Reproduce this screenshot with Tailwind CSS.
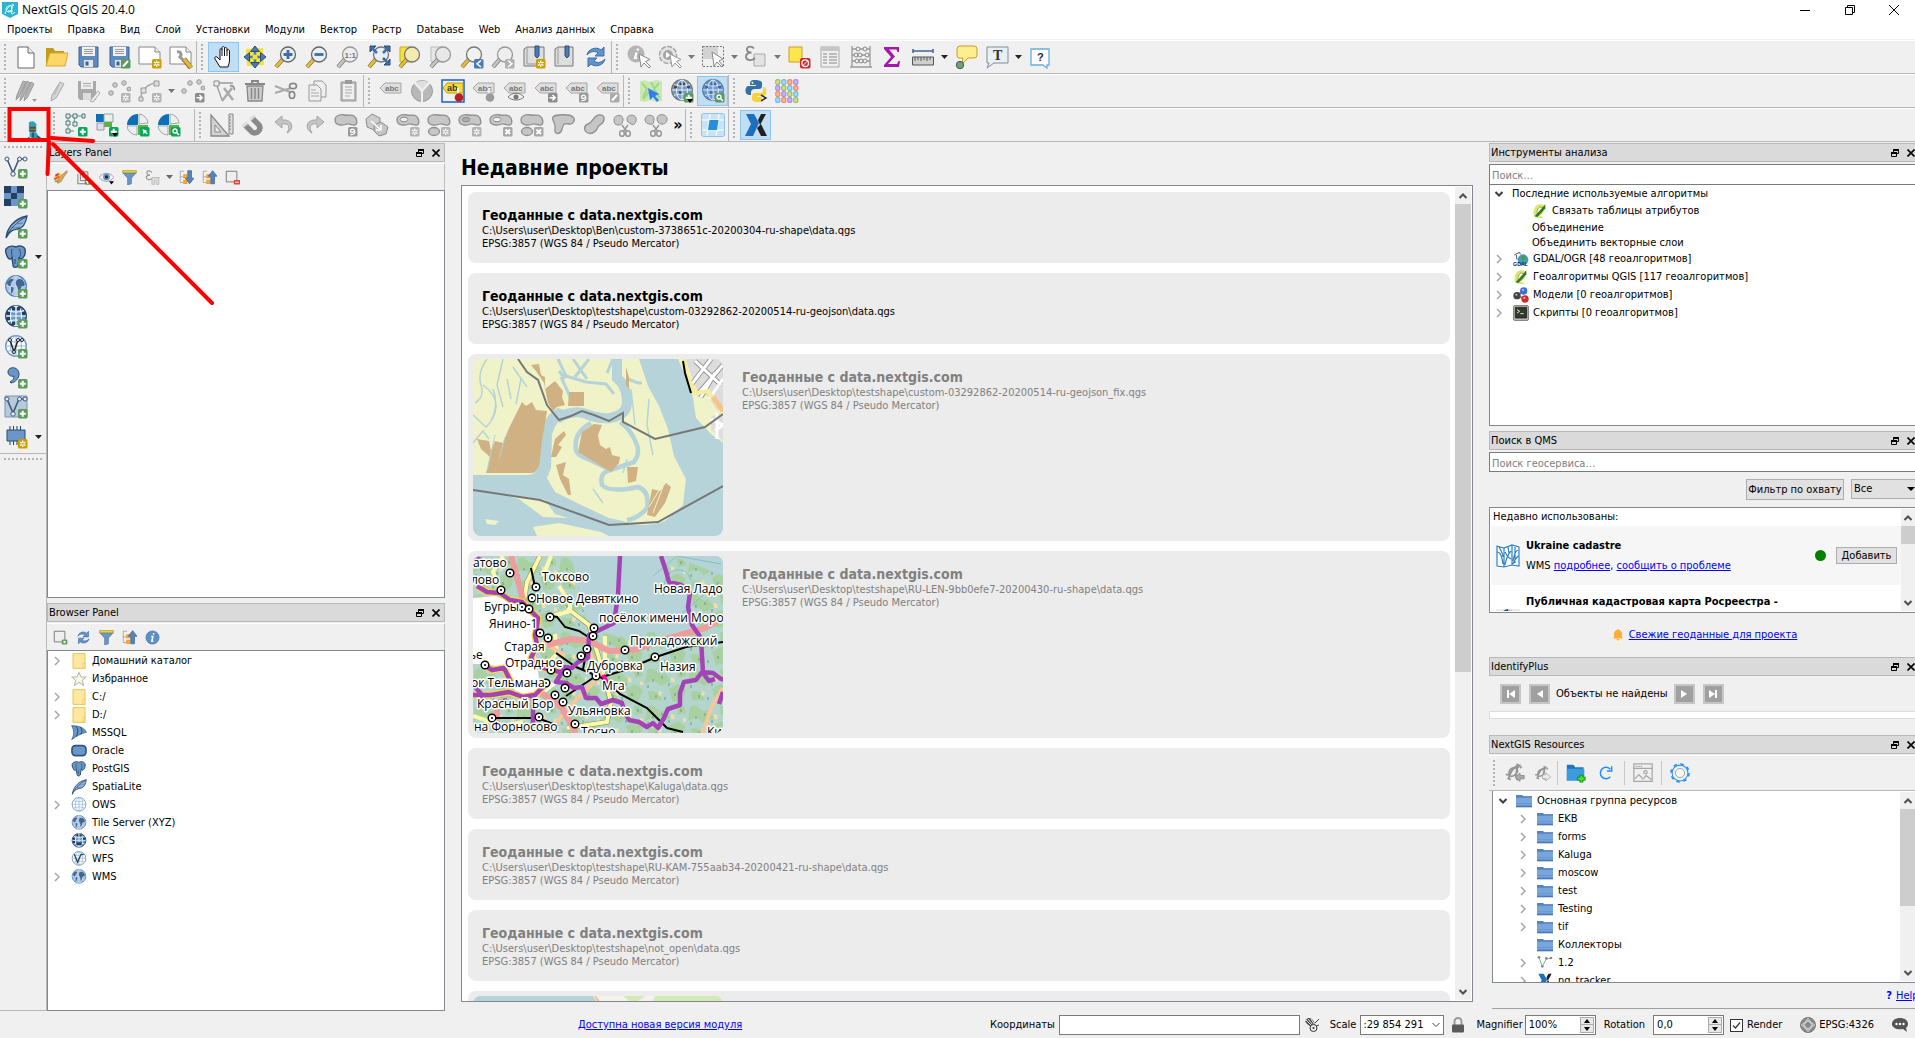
<!DOCTYPE html>
<html lang="ru">
<head>
<meta charset="utf-8">
<title>NextGIS QGIS 20.4.0</title>
<script src="https://cdn.jsdelivr.net/npm/@tailwindcss/browser@4"></script>
</head>
<body class="h-screen overflow-hidden bg-[#f0f0f0] text-black text-[11px] leading-4 font-['DejaVu_Sans_Condensed','Noto_Sans',sans-serif] flex flex-col relative cursor-default">

<header class="bg-white border-b border-[#f0f0f0] shrink-0">
  <div class="h-[19px] flex items-center pl-0.5">
    <svg class="size-4 mr-1" viewBox="0 0 16 16"><path d="M0 0h16v12l-8 4-8-4z" fill="#2cb5d3"/><path d="M3 12C5 5 9 2 12 3c-2 0-4 8-2 9 1 0 2-1 3-2M4 7c0-3 6-5 6-1s-5 6-6 1M6 9h5" fill="none" stroke="#fff"/></svg>
    <h1 class="font-['Open_Sans','Noto_Sans',sans-serif] text-xs leading-4 flex-1">NextGIS QGIS 20.4.0</h1>
    <button aria-label="Свернуть" class="w-[45px] h-4 grid place-items-center"><svg class="size-3" viewBox="0 0 12 12"><path d="M1 6.500h10" stroke="#000"/></svg></button>
    <button aria-label="Развернуть" class="w-[45px] h-4 grid place-items-center"><svg class="size-3" viewBox="0 0 12 12"><path d="M1.500 3.500h7v7h-7zM3.500 3.500v-2h7v7h-2" fill="none" stroke="#000"/></svg></button>
    <button aria-label="Закрыть" class="w-[43px] h-4 grid place-items-center"><svg class="size-3" viewBox="0 0 12 12"><path d="M1 1l10 10M11 1L1 11" stroke="#000"/></svg></button>
  </div>
  <nav id="menu" class="h-5 flex items-center gap-[15px] pl-[7px] pt-0.5"></nav>
</header>

<div id="bars" class="shrink-0"></div>

<main class="flex flex-1 min-h-0">
  <aside id="side" class="w-[47px] shrink-0 border-r border-b border-[#b8b8b8] flex flex-col"></aside>

  <div class="w-[398px] shrink-0 flex flex-col gap-[5px] pt-px">
    <section class="flex flex-col flex-[455] min-h-0">
      <div data-dock="Layers Panel"></div>
      <div id="layerTools" class="h-[27px] mt-px border-t border-r border-t-white border-[#c0c0c0] flex items-center pl-0.5 shrink-0"></div>
      <div class="flex-1 bg-white border border-[#828790]"></div>
    </section>
    <section class="flex flex-col flex-[408] min-h-0">
      <div data-dock="Browser Panel"></div>
      <div id="browserTools" class="h-[27px] mt-px border-t border-r border-t-white border-[#c0c0c0] flex items-center pl-0.5 shrink-0"></div>
      <ul id="browserTree" class="flex-1 bg-white border border-[#828790] pt-px"></ul>
    </section>
  </div>

  <section class="flex-1 min-w-0 flex flex-col px-4 pb-[9px]">
    <h2 class="text-[21px] leading-[26px] font-bold pt-[13px] pb-1">Недавние проекты</h2>
    <div class="flex-1 min-h-0 bg-white border border-[#828790] flex overflow-hidden pr-px">
      <div id="projects" class="flex-1 min-w-0 flex flex-col gap-2.5 pl-1.5 pr-[5px] pt-1.5 overflow-hidden"></div>
      <div class="w-4 bg-[#f0f0f0] flex flex-col my-px">
        <button aria-label="Вверх" class="h-[17px] grid place-items-center shrink-0"><svg class="size-2" viewBox="0 0 8 8"><path d="M0.500 6L4 2.500 7.500 6" fill="none" stroke="#505050" stroke-width="2"/></svg></button>
        <div class="bg-[#cdcdcd] grow-[467]"></div><div class="grow-[311]"></div>
        <button aria-label="Вниз" class="h-[17px] grid place-items-center shrink-0"><svg class="size-2" viewBox="0 0 8 8"><path d="M0.500 2L4 5.500 7.500 2" fill="none" stroke="#505050" stroke-width="2"/></svg></button>
      </div>
    </div>
  </section>

  <div class="w-[426px] shrink-0 flex flex-col pt-px overflow-hidden">
    <section class="flex flex-col flex-1 min-h-0 mb-[5px]">
      <div data-dock="Инструменты анализа"></div>
      <input aria-label="Поиск алгоритма" placeholder="Поиск…" class="mt-0.5 h-[21px] pt-0.5 shrink-0 bg-white border border-r-0 border-[#7a7a7a] px-0.5 placeholder:text-[#808080]">
      <ul id="toolTree" class="flex-1 bg-white border border-r-0 border-t-0 border-[#828790] pt-px"></ul>
    </section>

    <section class="flex flex-col">
      <div data-dock="Поиск в QMS"></div>
      <input aria-label="Поиск геосервиса" placeholder="Поиск геосервиса…" class="mt-0.5 h-[20px] pt-0.5 bg-white border border-r-0 border-[#7a7a7a] px-0.5 placeholder:text-[#808080]">
      <div class="flex justify-end items-start gap-[7px] pt-[7px]">
        <button class="h-[21px] w-[98px] bg-[#e1e1e1] border border-[#adadad] whitespace-nowrap grid place-items-center">Фильтр по охвату</button>
        <div class="relative w-16">
          <select aria-label="Тип геосервиса" class="appearance-none w-full h-5 bg-[#e1e1e1] border border-r-0 border-[#adadad] pl-0.5"><option>Все</option></select>
          <svg class="absolute right-0 top-2 w-2 h-1 pointer-events-none" viewBox="0 0 8 4"><path d="M0 0h8L4 4z"/></svg>
        </div>
      </div>
      <div class="mt-[7px] h-[106px] bg-white border border-r-0 border-[#828790] flex overflow-hidden p-px pr-0">
        <div class="flex-1 min-w-0 overflow-hidden">
          <p class="pl-0.5 pb-px leading-4 h-[17px]">Недавно использованы:</p>
          <article class="bg-[#f6f6f6] h-[59px] flex items-center pl-[5px] pr-1">
            <svg class="size-6 shrink-0 mr-1.5" viewBox="0 0 24 24"><path d="M0 0h24v24H0z" fill="#fff"/><path d="M1 2l7 2 8-3 7 2v19l-7-1-8 2-7-1zM8 4v19M16 1v20M1 8c4 0 5 6 6 12M3 3c3 5 4 8 4 10M9 8c2 4 4 6 6 7M15 7c-4 4-5 9-6 14M22 6c-3 1-4 5-5 11M19 3v16M12 3l1 6M22 12c-3 3-4 5-5 8" fill="none" stroke="#2a7fc4" stroke-width="1.200"/></svg>
            <div class="flex-1">
              <h3 class="font-bold pb-1 pt-px">Ukraine cadastre</h3>
              <p>WMS <a href="#" class="text-[#0000ff] underline">подробнее</a>, <a href="#" class="text-[#0000ff] underline">сообщить о проблеме</a></p>
            </div>
            <span class="size-[11px] rounded-full bg-[#008000] mr-2.5"></span>
            <button class="h-[17px] w-[61px] bg-[#e1e1e1] border border-[#adadad] grid place-items-center">Добавить</button>
          </article>
          <article class="flex pl-[5px] pr-1 pt-2.5">
            <svg class="size-6 shrink-0 mr-1.5 mt-3.5" viewBox="0 0 24 24"><path d="M0 0h24v24H0z" fill="#eaeaea"/><path d="M4 8A9 9 0 0 1 12 0v12z" fill="#0a4f92"/><path d="M12 0a9 9 0 0 1 8 8l-8 4z" fill="#b9b9b9"/></svg>
            <h3 class="font-bold flex-1 leading-[14px]">Публичная кадастровая карта Росреестра -<br>Районы</h3>
            <button class="h-[17px] w-[61px] mt-4 bg-[#e1e1e1] border border-[#adadad] grid place-items-center">Добавить</button>
          </article>
        </div>
        <div class="w-3.5 bg-[#f0f0f0] flex flex-col">
          <button aria-label="Вверх" class="h-[17px] grid place-items-center shrink-0"><svg class="size-2" viewBox="0 0 8 8"><path d="M0.500 6L4 2.500 7.500 6" fill="none" stroke="#505050" stroke-width="2"/></svg></button>
          <div class="bg-[#cdcdcd] h-[18px] shrink-0"></div><div class="flex-1"></div>
          <button aria-label="Вниз" class="h-[17px] grid place-items-center shrink-0"><svg class="size-2" viewBox="0 0 8 8"><path d="M0.500 2L4 5.500 7.500 2" fill="none" stroke="#505050" stroke-width="2"/></svg></button>
        </div>
      </div>
      <p class="h-[44px] flex items-center justify-center gap-1.5 pl-1.5">
        <svg class="w-2.5 h-3" viewBox="0 0 10 12"><path d="M5 0c1 0 1 1 1 1 2 .5 3 2 3 4v3l1 1.500H0L1 8V5c0-2 1-3.500 3-4 0 0 0-1 1-1zM3.500 10h3a1.500 1.500 0 0 1-3 0z" fill="#ffad33"/></svg>
        <a href="#" class="text-[#0000ff] underline">Свежие геоданные для проекта</a>
      </p>
    </section>

    <section class="flex flex-col pb-4">
      <div data-dock="IdentifyPlus"></div>
      <div id="identify" class="flex items-center h-[35px] pl-[11px] gap-2"></div>
      <div class="h-2 bg-white border border-r-0 border-[#dcdcdc]"></div>
    </section>

    <section class="flex flex-col">
      <div data-dock="NextGIS Resources"></div>
      <div id="ngTools" class="h-9 mt-px border-t border-t-white border-b border-b-[#b8b8b8] flex items-center"></div>
      <div class="h-[192px] ml-[3px] bg-white border border-t-0 border-r-0 border-[#828790] flex overflow-hidden">
        <ul id="ngTree" class="flex-1 min-w-0 overflow-hidden pt-px"></ul>
        <div class="w-[15px] bg-[#f0f0f0] flex flex-col my-px">
          <button aria-label="Вверх" class="h-[17px] grid place-items-center shrink-0"><svg class="size-2" viewBox="0 0 8 8"><path d="M0.500 6L4 2.500 7.500 6" fill="none" stroke="#505050" stroke-width="2"/></svg></button>
          <div class="bg-[#cdcdcd] h-[97px] shrink-0"></div><div class="flex-1"></div>
          <button aria-label="Вниз" class="h-[17px] grid place-items-center shrink-0"><svg class="size-2" viewBox="0 0 8 8"><path d="M0.500 2L4 5.500 7.500 2" fill="none" stroke="#505050" stroke-width="2"/></svg></button>
        </div>
      </div>
      <p class="h-[26px] ml-[3px] border-b border-[#a0a0a0] flex items-center justify-end gap-1 text-[#0000ff] whitespace-nowrap mb-0.5"><b>?</b><a href="#" class="underline w-[19px]">Help</a></p>
    </section>
  </div>
</main>

<footer class="h-[27px] shrink-0 flex items-center whitespace-nowrap pt-px">
  <div class="w-[446px] shrink-0"></div>
  <div class="flex-1 pl-[132px]"><a href="#" class="text-[#0000ff] underline">Доступна новая версия модуля</a></div>
  <label for="coord" class="mr-1">Координаты</label>
  <input id="coord" class="w-[241px] h-5 bg-white border border-[#7a7a7a] mr-1">
  <svg class="size-4 mr-2.5" viewBox="0 0 16 16"><path d="M5 1c3 0 6 4 6 7 0 2-1 3-3 2C5 9 2 6 1 4c0-2 2-3 4-3z" fill="#444"/><path d="M2 3l6 6M4 2l5 6M7 2l4 6M3 1l-2 3" stroke="#eee"/><circle cx="9.500" cy="11" r="3.500" fill="#eee" stroke="#333"/><circle cx="9.500" cy="11" r="1" fill="#333"/><path d="M11 6l4-4M12 9l3-1" stroke="#444"/></svg>
  <label for="scale" class="mr-1">Scale</label>
  <div class="relative w-[84px] mr-1">
    <select id="scale" class="appearance-none w-full h-5 bg-white border border-[#7a7a7a] px-0.5"><option>:29 854 291</option></select>
    <svg class="absolute right-1 top-1.5 w-2 h-2 pointer-events-none" viewBox="0 0 8 8"><path d="M0.500 2L4 5.500 7.500 2" fill="none" stroke="#444"/></svg>
  </div>
  <svg class="w-3 h-4 mr-3 ml-1" viewBox="0 0 12 16"><path d="M2.500 8V4.500a3.500 3.500 0 0 1 7 0V8" fill="none" stroke="#999" stroke-width="2"/><rect y="7.500" width="12" height="8" rx="1" fill="#5a5a5a"/></svg>
  <label for="mag" class="mr-0.5">Magnifier</label>
  <div class="flex w-[71px] h-5 bg-white border border-[#7a7a7a] mr-2 p-px">
    <input id="mag" value="100%" class="w-0 flex-1 pl-0.5">
    <div class="w-3.5 flex flex-col bg-[#e8e8e8] border border-[#adadad] justify-around items-center"><svg class="w-1.5 h-1" viewBox="0 0 6 4"><path d="M0 4l3-4 3 4z"/></svg><hr class="w-full border-[#adadad]"><svg class="w-1.5 h-1" viewBox="0 0 6 4"><path d="M0 0l3 4 3-4z"/></svg></div>
  </div>
  <label for="rot" class="mr-2">Rotation</label>
  <div class="flex w-[71px] h-5 bg-white border border-[#7a7a7a] mr-1.5 p-px">
    <input id="rot" value="0,0" class="w-0 flex-1 pl-0.5">
    <div class="w-3.5 flex flex-col bg-[#e8e8e8] border border-[#adadad] justify-around items-center"><svg class="w-1.5 h-1" viewBox="0 0 6 4"><path d="M0 4l3-4 3 4z"/></svg><hr class="w-full border-[#adadad]"><svg class="w-1.5 h-1" viewBox="0 0 6 4"><path d="M0 0l3 4 3-4z"/></svg></div>
  </div>
  <label class="flex items-center gap-1 mr-[18px]"><span class="relative size-[13px]"><input type="checkbox" checked class="appearance-none block size-[13px] bg-white border border-[#333]"><svg class="absolute inset-0 size-[13px] pointer-events-none" viewBox="0 0 13 13"><path d="M3 6.500L5.500 9 10 3.500" fill="none" stroke="#333" stroke-width="1.200"/></svg></span>Render</label>
  <button class="flex items-center gap-[3px] mr-[18px]"><svg class="size-4" viewBox="0 0 16 16"><circle cx="8" cy="8" r="7.500" fill="#888"/><circle cx="8" cy="8" r="4.500" fill="none" stroke="#ccc"/><path d="M8 .5L4.500 8 8 15.500 11.500 8zM.5 8L8 4.500 15.500 8 8 11.500z" fill="none" stroke="#d5d5d5" stroke-width=".8"/><circle cx="8" cy="8" r="7.500" fill="none" stroke="#777"/></svg>EPSG:4326</button>
  <button aria-label="Сообщения" class="mr-[7px]"><svg class="size-4" viewBox="0 0 16 16"><path d="M8 1c4 0 8 2 8 6 0 2-1 3-2 4l1 4-4-3c-6 1-11-1-11-5s4-6 8-6z" fill="#555"/><circle cx="4.500" cy="7" r="1.200" fill="#fff"/><circle cx="8" cy="7" r="1.200" fill="#fff"/><circle cx="11.500" cy="7" r="1.200" fill="#fff"/></svg></button>
</footer>

<!-- red marker around the bot button -->
<svg class="absolute left-0 top-[100px] w-[230px] h-[220px] pointer-events-none" viewBox="0 100 230 220" fill="none" stroke="#f00" stroke-width="4" stroke-linecap="round"><path d="M9.500 109h39v31h-39z"/><path d="M51 138l42 3M49 142l-1.500 32M53 144l159 159"/></svg>

<script>
// ---- icon drawings, 24 x 24 ----
const badge = (c, inner) => `<rect x="14" y="14" width="9.500" height="9.500" rx="1.500" fill="${c}"/>${inner}`;
const plus = badge('#5c9a5c', '<path d="M18.700 15.800v6M15.800 18.700h6" stroke="#fff" stroke-width="2"/>');
const gplus = badge('#09a55b', '<path d="M18.700 15.800v6M15.800 18.700h6" stroke="#fff" stroke-width="2"/>');
const starOf = c => badge(c, '<path d="M18.700 15.500v6.500M16 17l5.500 3.500M21.500 17L16 20.500" stroke="#fff" stroke-width="1.300"/><circle cx="18.700" cy="18.700" r="1" fill="' + c + '"/>');
const star = starOf('#c9a000'), gstar = starOf('#b4b4b4');
const gx = badge('#a8a8a8', '<path d="M16.500 16.500l4.500 4.500M21 16.500L16.500 21" stroke="#fff" stroke-width="2"/>');
const garrow = badge('#8c8c8c', '<path d="M15.500 18.700h5M18.500 16l2.700 2.700-2.700 2.700" stroke="#fff" stroke-width="1.500" fill="none"/>');
const grot = badge('#999', '<path d="M16.500 21.500c4 .5 5-2 4-4s-4-1.500-4 .5 3 2 3 0" stroke="#fff" stroke-width="1.300" fill="none"/>');
const gpen = badge('#aaa', '<path d="M16 21.500l5-5.500" stroke="#fff" stroke-width="2"/>');
const lens = (f, s, h, extra = '') => `<path d="M2 22l7-8" stroke="#555" stroke-width="4"/><path d="M2 22l6.500-7.500" stroke="${h}" stroke-width="3"/><circle cx="14" cy="9.500" r="7.500" fill="${f}" stroke="${s}" stroke-width="1.300"/>${extra}`;
const abc = (f, s, t) => `<path d="M1 9l5-5h16v10H6z" fill="${f}" stroke="${s}"/><text x="6" y="12" font-size="8" font-weight="bold" fill="${t}" font-family="Liberation Sans">abc</text>`;
const gabc = abc('#dedede', '#a5a5a5', '#777');
const pin = (c, f) => `<path d="M17 9v7" stroke="${f}" stroke-width="2"/><circle cx="18" cy="18.500" r="4.300" fill="${c}"/>`;
const blob = '<path d="M1 7c0-5 6-6 10-5s6-1 9 1 4 8 1 9-6-2-8-1-12 3-12-4z" fill="#c6c6c6" stroke="#8f8f8f" stroke-width="1.300"/>';
const ring = '<ellipse cx="8" cy="6.500" rx="3.800" ry="2.300" fill="#f0f0f0" stroke="#8d8d8d"/>';
const globe = (f, s, l) => `<circle cx="12" cy="11" r="10.300" fill="${f}" stroke="${s}" stroke-width="1.300"/><path d="M2 11h20M12 1v20M4 5.500c5 2 11 2 16 0M4 16.500c5-2 11-2 16 0" stroke="${l}" fill="none"/><ellipse cx="12" cy="11" rx="5.500" ry="10" fill="none" stroke="${l}"/>`;
const worldBlobs = '<path d="M3 7c2-3 5-4 6-3s-1 3-2 4 1 3-1 3-3-2-3-4zM7 12c3 0 3 2 2 4s-1 3-2 2zM13 5c2-2 6-1 7 2s1 4-1 4-2 2-3 5-2 1-2-2-2-3-2-5-1-2 1-4z" fill="#31557e" fill-opacity=".85"/>';
const cursor = (f, s) => `<path d="M12 9l2 13 3-4 5 5 1.500-1.500-5-5 4.500-2z" fill="${f}" stroke="${s}"/>`;
const pie = '<path d="M12 1v11H1A11 11 0 0 1 12 1z" fill="#0d6fb5"/><path d="M13 1a10 10 0 0 1 9 9l-9 1z" fill="#eee" stroke="#9aa"/><path d="M1 13h10v9A10 10 0 0 1 1 13z" fill="#eee" stroke="#9aa"/><path d="M12 12h10v10H12z" fill="#5ab246"/>';
const scissors = '<path d="M9 12l5 7M15 12l-5 7" stroke="#999" stroke-width="1.500"/><ellipse cx="9" cy="20.500" rx="2.300" ry="2.800" fill="none" stroke="#999" stroke-width="1.500"/><ellipse cx="15" cy="20.500" rx="2.300" ry="2.800" fill="none" stroke="#999" stroke-width="1.500"/>';
const letterX = '<path d="M2 1h8l5 9-6 13H1l6-12z" fill="#1a6fbf"/><path d="M22 1h-5l-3 6 2 5zM13 15l4 8h6l-6-12z" fill="#222"/>';
const elephant = '<path d="M2 4c3-4 8-3 10-2 3-2 8-1 9 2 1 5-1 9-4 10l-2-1-1 8c-1 2-5 2-5-1l-1-7c-2 2-4 1-5-2S1 7 2 4z" fill="#6a97c8" stroke="#2c4a70" stroke-width="1.400"/><path d="M8 4c-1 3 0 6 0 9M15 4c2 3 2 6 0 9M11 14v5" fill="none" stroke="#2c4a70"/>';
const vee = c => `<path d="M3 4l6 14 6-14h5" fill="none" stroke="${c}" stroke-width="1.600"/><circle cx="3" cy="4" r="2" fill="#eee" stroke="${c}"/><circle cx="9" cy="19" r="2.200" fill="#eee" stroke="${c}"/><circle cx="15.500" cy="4" r="2" fill="#eee" stroke="${c}"/><circle cx="21" cy="4" r="2" fill="#eee" stroke="${c}"/>`;
const feather = '<path d="M2 23C3 14 9 4 23 1c-1 6-3 12-9 13-5 1-8 1-12 9z" fill="#8fb4dd" stroke="#2c4a70" stroke-width="1.300"/><path d="M3 20C8 12 14 6 22 2" fill="none" stroke="#2c4a70"/><path d="M9 13l7-1M12 9l7-1" fill="none" stroke="#5d83ad"/>';
const gis = '<path d="M4 20C6 10 12 3 17 3c-3 3-5 12-3 16 1 2 4 0 5-2M5 12c0-5 6-8 9-5s-2 9-6 9-3-2-3-4M3 18l4 2M14 1l2 2M18 6l2-2M1 14h3" fill="none" stroke="#969696" stroke-width="2.200"/>';
const folderB = '<path d="M0 3h9l1.500 2H24v16H0z" fill="#78a5dc"/><path d="M0 3h9l1.500 2H24v2H0z" fill="#5583bd"/><path d="M0 19h24v2.500H0z" fill="#4a78b3"/><path d="M0 16h24" stroke="#5f8fca"/>';
const filter = '<path d="M1 1h22v4H1z" fill="#f0d833" stroke="#9b8b1d"/><path d="M2 5h20l-7 8v9l-6 2V13z" fill="#6a97c8" stroke="#4a6f9c"/>';
const refresh = '<path d="M3 10C4 4 12 1 17 5l3-3v9h-9l3-3c-4-3-8-1-11 2zM21 14c-1 6-9 9-14 5l-3 3v-9h9l-3 3c4 3 8 1 11-2z" fill="#5e93cc" stroke="#3f6fa6"/>';
const treeDots = '<path d="M2 2h6M2 2v18h6M2 11h6" stroke="#888" fill="none"/><path d="M8 8h4v4H8zM8 17h4v4H8z" fill="none" stroke="#ff9c1c" stroke-width="2.500"/>';
const qgisQ = '<path d="M3 20C1 12 4 2 12 2s9 4 7 9-6 8-10 7c4 2 8 2 9 5-8 0-14-1-15-3z" fill="#d9e86c"/><path d="M12 6c-5 2-6 12-2 12s6-8 6-11z" fill="#fff" stroke="#6d8b1b"/><path d="M4 20L20 2v6L8 21z" fill="#2f7a2a"/>';

const I = {
  new: '<path d="M4 2h10l6 6v15H4z" fill="#fff" stroke="#666"/><path d="M14 2v6h6" fill="#eee" stroke="#666"/>',
  open: '<path d="M1 21V3h7l2 3h9v4" fill="#c29a1c"/><path d="M1 21L5 8h18l-3 13z" fill="#fcd667" stroke="#d9a92c"/>',
  save: '<path d="M3 2h19v20H5l-2-2z" fill="#5d8ac0" stroke="#3f628e"/><path d="M6 2h13v9H6z" fill="#f3f3f3"/><path d="M8 4.500h9M8 6.500h9M8 8.500h9" stroke="#999"/><path d="M8 15h9v7H8z" fill="#e5e5e5"/><path d="M9.500 16.500h3v4h-3z" fill="#3f628e"/>',
  new2: '<path d="M1 2h16l5 5v12H1z" fill="#fff" stroke="#888"/><path d="M17 2v5h5" fill="#eee" stroke="#888"/>' + star,
  wrench: '<path d="M1 2h16l5 5v12H1z" fill="#fff" stroke="#888"/><path d="M17 2v5h5" fill="#eee" stroke="#888"/><path d="M8 7c4-1 5 3 3 5l4 4M14 14l2 3" fill="none" stroke="#999" stroke-width="3"/><path d="M15 14l7 9" stroke="#8a6a1a" stroke-width="5"/><path d="M15 14l7 8.500" stroke="#e3b93a" stroke-width="3.500"/>',
  hand: '<path d="M8 22l-5-8c-1-2 1-3 2-2l3 3V5c0-2 2-2 2 0V3c0-2 2.500-2 2.500 0v1c0-2 2.500-2 2.500 0v2c0-2 2.500-2 2.500 0v9c0 3-1 4-1.500 7z" fill="#fff" stroke="#111"/><path d="M10 5v6M12.500 4v7M15 6v5" stroke="#111"/>',
  pan: '<path d="M3 4l17-1 1 17-17 1z" fill="#f6e13a"/><path d="M12 5v14M5 12h14" stroke="#4a7ab5" stroke-width="2.500"/><path d="M12 1l4.500 5.500h-9zM12 23l4.500-5.500h-9zM1 12l5.500-4.500v9zM23 12l-5.500-4.500v9z" fill="#4a7ab5" stroke="#2d4d77"/><circle cx="12" cy="12" r="2.500" fill="#f6e13a"/>',
  zin: lens('#e9eff6', '#666', '#e8bb35', '<path d="M14 5v9M9.500 9.500h9" stroke="#3f6ca6" stroke-width="2.800"/>'),
  zout: lens('#e9eff6', '#666', '#e8bb35', '<path d="M9.500 9.500h9" stroke="#3f6ca6" stroke-width="2.800"/>'),
  z11: lens('#eee', '#999', '#c4c4c4', '<text x="8.500" y="12.500" font-size="8" font-weight="bold" fill="#777" font-family="Liberation Sans">1:1</text>'),
  zfull: lens('#e8eef5', '#777', '#e8bb35', '<path d="M3 1h6L3 7zM23 1v6l-6-6zM23 20v-6l-6 6z" fill="#3f6ca6" stroke="#2d4d77"/><path d="M4 2l6 6M22 2l-6 6M22 19l-6-6" stroke="#3f6ca6" stroke-width="2.500"/>'),
  zsel: '<path d="M2 2h12v15H2z" fill="#f6e13a" stroke="#c4b020"/>' + lens('#f3ebb0', '#777', '#e8bb35'),
  zlay: '<path d="M2 2h12v15H2z" fill="#e6e6e6" stroke="#bbb"/>' + lens('#e8e8e8', '#999', '#c4c4c4'),
  zlast: lens('#f1f1f1', '#777', '#e8bb35', badge('#4a7ab5', '<path d="M21 15.500l-4 3.300 4 3.200" fill="none" stroke="#fff" stroke-width="1.500"/>')),
  znext: lens('#eee', '#999', '#c4c4c4', badge('#b0b0b0', '<path d="M17 15.500l4 3.300-4 3.200" fill="none" stroke="#fff" stroke-width="1.500"/>')),
  bmnew: '<path d="M2 4l3-2h17v19H2z" fill="#dedede" stroke="#777"/><path d="M5 2v17M5 19h17" stroke="#999"/><path d="M13 1h4v10l-2 2-2-2z" fill="#4a7ab5" stroke="#2d4d77"/>' + star,
  bm: '<path d="M2 4l3-2h15v19H2z" fill="#dedede" stroke="#777"/><path d="M5 2v17" stroke="#999"/><path d="M12 1h4v10l-2 2-2-2z" fill="#4a7ab5" stroke="#2d4d77"/>',
  refresh,
  info: '<circle cx="9" cy="9" r="8.500" fill="#b5b5b5"/><path d="M11 3.500l-.5 2M9.500 7.500L8 13h2" stroke="#fff" stroke-width="2.200" fill="none"/>' + cursor('#fff', '#888'),
  gear: '<circle cx="10" cy="10" r="8.500" fill="#e3e3e3" stroke="#a5a5a5" stroke-width="1.500" stroke-dasharray="5 1.500"/><circle cx="10" cy="10" r="5" fill="#a5a5a5"/><path d="M8 7l5 3-5 3z" fill="#fff"/>' + cursor('#fff', '#999'),
  select: '<path d="M2 1h15v13H2z" fill="#d2d2d2"/><path d="M1.500 1.500h21v20h-21z" fill="none" stroke="#777" stroke-dasharray="2 1.500"/><path d="M11 7l2 14 3-4 5 5 1-1-4-5 4-2z" fill="#fff" stroke="#888"/>',
  eps: '<path d="M10 9h11v12H10z" fill="#e3e3e3" stroke="#aaa"/><path d="M10 3.500C7 0 2 2 3 5q.5 2.500 4.500 2.500Q2 8 2 11.500C2 16 8 16 11 13" fill="none" stroke="#888" stroke-width="1.800"/>',
  desel: '<path d="M2 2h13v15H2z" fill="#fbe64d" stroke="#c9a21c"/><rect x="13" y="13" width="10.500" height="10.500" rx="2" fill="#d8262c"/><circle cx="18.200" cy="18.200" r="3.300" fill="none" stroke="#fff" stroke-width="1.300"/><path d="M20.500 16l-5 5" stroke="#fff"/>',
  table: '<path d="M3 2h18v20H3z" fill="#eee" stroke="#aaa"/><path d="M3 2h18v4H3z" fill="#c5c5c5"/><path d="M5 9h4M5 12h4M5 15h4M5 18h4M11 9h8M11 12h8M11 15h8M11 18h8" stroke="#aaa" stroke-width="1.500"/>',
  abacus: '<path d="M3 1v21M21 1v21M3 4h18M3 10h18M3 16h18M1 22h22" stroke="#999" stroke-width="1.300"/><g fill="#eee" stroke="#888"><circle cx="9" cy="4" r="2"/><circle cx="16" cy="4" r="2"/><circle cx="7" cy="10" r="2"/><circle cx="11" cy="10" r="2"/><circle cx="18" cy="10" r="2"/><circle cx="8" cy="16" r="2"/><circle cx="12" cy="16" r="2"/><circle cx="16" cy="16" r="2"/></g>',
  sigma: '<path d="M4 2h15v5h-1.500l-1-2.500H9l6 7-7 7.500h9l1.500-3H20l-1 6H4v-2l7-8-7-8z" fill="#a31aa8"/>',
  ruler: '<path d="M2 6h20M2 4v4M22 4v4" stroke="#40648f" stroke-width="1.500"/><path d="M1.500 12h21v8h-21z" fill="#cfcfcf" stroke="#555"/><path d="M4 12v4M7 12v3M10 12v4M13 12v3M16 12v4M19 12v3" stroke="#555"/>',
  tip: '<path d="M6 1h14q3 0 3 3v6q0 3-3 3h-6l-6 6 1-6H5q-2 0-2-3V4q0-3 3-3z" fill="#fdee91" stroke="#c9a21c"/><circle cx="6" cy="20" r="3.700" fill="#6fa46f" stroke="#456"/>',
  text: '<path d="M2 2h21v16H9l-7 5 2-5H2z" fill="#e8f0f4" stroke="#889"/><text x="8" y="14.500" font-size="14" font-weight="bold" fill="#333" font-family="Liberation Serif">T</text>',
  help: '<path d="M3 4h18v16h-2v3l-4-3H3z" fill="#fff" stroke="#6cabdc" stroke-width="1.300"/><text x="9" y="16" font-size="11" font-weight="bold" fill="#225" font-family="Liberation Sans">?</text>',
  pencils: '<path d="M2 21l1-5L9 2l3 1-7 15zM6 22l1-5L13 2l3 2-7 14zM10 22l1-5L17 3l3 2-7 14z" fill="#b4b4b4" stroke="#999"/><path d="M18 20h5l-2.500 3z" fill="#999"/>',
  pencil: '<path d="M6 22l1-6L15 3l4 2-8 14z" fill="#d6d6d6" stroke="#aaa"/><path d="M14 6L9 16" stroke="#bbb" stroke-width="1.500"/>',
  gsave: '<path d="M2 2h18v19H4l-2-2z" fill="#a9a9a9"/><path d="M5 2h12v8H5z" fill="#eee"/><path d="M7 4.500h8M7 7h8" stroke="#aaa"/><path d="M7 14h8v7H7z" fill="#ddd"/><path d="M14 22l8-10 2 2-7 9z" fill="#eee" stroke="#aaa"/>',
  pts: '<g fill="#ccc" stroke="#999"><circle cx="4" cy="14" r="2.300"/><circle cx="8" cy="6" r="2.300"/><circle cx="17" cy="4" r="2.300"/><circle cx="22" cy="10" r="2"/></g>' + gstar,
  arc: '<path d="M3 21C2 12 9 5 18 4" fill="none" stroke="#aaa" stroke-width="1.500"/><path d="M1 18h4v4H1zM3 9h5v5H3zM16 2h5v5h-5z" fill="#ddd" stroke="#999"/>' + gstar,
  ptmove: '<g fill="#ccc" stroke="#999"><circle cx="3" cy="12" r="2.300"/><circle cx="9" cy="4" r="2.300"/><circle cx="18" cy="3" r="2.300"/><circle cx="22" cy="9" r="2"/></g>' + garrow,
  node: '<path d="M4 4h17M4 4l6 17" stroke="#999" stroke-width="1.300"/><path d="M2 2h5v5H2z" fill="#eee" stroke="#888"/><path d="M12 9l9 12M20 9L10 22" stroke="#aaa" stroke-width="2.500"/><path d="M18 7c3-1 5 2 4 4" fill="none" stroke="#999" stroke-width="2"/>',
  trash: '<path d="M4 7h16l-1 15H5z" fill="#ccc" stroke="#888" stroke-width="1.300"/><path d="M2 5h20M9 5V2h6v3" stroke="#888" stroke-width="2" fill="none"/><path d="M8.500 9v11M12 9v11M15.500 9v11" stroke="#888" stroke-width="1.500"/>',
  cut: '<path d="M1 7l15 6M1 14L17 9" stroke="#aaa" stroke-width="2"/><ellipse cx="19" cy="7" rx="3.500" ry="2.700" fill="none" stroke="#888" stroke-width="1.700"/><ellipse cx="18" cy="16" rx="2.700" ry="3.500" fill="none" stroke="#888" stroke-width="1.700"/>',
  copy: '<path d="M9 2h8l4 4v12H9z" fill="#eee" stroke="#999"/><path d="M4 6h8l4 4v12H4z" fill="#eee" stroke="#999"/><path d="M6 11h5M6 14h8M6 17h8" stroke="#aaa"/>',
  paste: '<path d="M5 3h15v19H5z" fill="#bbb" stroke="#999"/><path d="M7 5h11v15H7z" fill="#f0f0f0"/><path d="M9 1h7v4H9z" fill="#999"/><path d="M9 8h7M9 11h7M9 14h7M9 17h5" stroke="#aaa"/>',
  abc: gabc,
  pie: '<circle cx="12" cy="12" r="10.500" fill="#b8b8b8" stroke="#999"/><path d="M12 12L5 4a11 11 0 0 1 14 0z" fill="#dedede"/><path d="M12 12L4 3M12 12l8-9M12 12v11" stroke="#f0f0f0" stroke-width="2"/>',
  ablue: '<path d="M1 1h22v22H1z" fill="none" stroke="#1a5fc0" stroke-width="1.500"/><path d="M2 9l4-5h16v10H6z" fill="#f6dc3a" stroke="#b79b1a"/><text x="6" y="12" font-size="9" font-weight="bold" fill="#333" font-family="Liberation Sans">ab</text>' + pin('#b81f1f', '#eee'),
  apin: gabc + pin('#9a9a9a', '#eee'),
  aeye: gabc + '<path d="M5 18c4-5 12-5 16 0-4 4-12 4-16 0z" fill="#eee" stroke="#777"/><circle cx="13" cy="18" r="2.500" fill="#777"/>',
  amove: gabc + garrow, arot: gabc + grot, aedit: gabc + gpen,
  map: '<path d="M1 2l5-1 5 2 6-2 6 1v20l-6 1-6-2-5 2-5-1z" fill="#c9e8b2"/><path d="M3 4l5 6-4 8M12 3l3 6M20 4l-5 6 6 9M4 20l6-7" stroke="#a2d68c" stroke-width="2" fill="none"/><path d="M9 9l2 12 3-3 4 5 2-2-4-4 4-2z" fill="#2f7cf6"/>',
  wadd: globe('#6d9bd0', '#777', '#eee') + '<path d="M4 8h3M9.500 5h2M13 5h2M17 8h3M9 13.500h2.500" stroke="#4a4a4a" stroke-width="2.500"/>' + plus + '<path d="M17 20h6l-3 4z"/>',
  wfind: globe('#6d9bd0', '#5a7ea8', '#dfe8f2') + '<path d="M4 8h3M9.500 5h2M13 5h2M17 8h3M9 13.500h2.500" stroke="#3f6aa0" stroke-width="2.500"/>' + badge('#5c9a5c', '<circle cx="18" cy="18" r="2" fill="none" stroke="#fff" stroke-width="1.300"/><path d="M19.500 19.500l2.500 2.500" stroke="#fff" stroke-width="1.500"/>'),
  py: '<path d="M11 1c-5 0-5 2-5 5h6v1H4c-3 0-4 9 1 9h2v-3c0-2 2-3 4-3h4c2 0 3-1 3-3V4c0-2-3-3-7-3z" fill="#3571a3"/><circle cx="8.500" cy="3.800" r="1" fill="#fff"/><path d="M13 23c5 0 5-2 5-5h-5v-1h7c3 0 3-9 0-9h-1v3c0 3-2 3-4 3h-4c-2 0-3 1-3 3v3c0 2 2 3 5 3z" fill="#fbd23e"/><path d="M17 16l5 3-5 3" fill="none" stroke="#333" stroke-width="1.500"/>',
  grid: [0, 1, 2, 3].map(r => [0, 1, 2, 3].map(c => `<rect x="${c * 6 + .8}" y="${r * 6 + .8}" width="4" height="4.500" rx=".5" fill="${['#cfe0a0', '#a8dcf5', '#ffb59a', '#cdb5f5'][(c + r * 3) % 4]}" stroke="${['#8db130', '#4bb4e6', '#f07848', '#9a78e0'][(c + r * 3) % 4]}"/>`).join('')).join(''),
  bot: '<path d="M7 3q6-4 9 2v9H7z" fill="#2ba3c7"/><path d="M8 7h7v8H8z" fill="#8a7a3a"/><path d="M8 9.500h7M8 13h7" stroke="#1b4c75" stroke-width="1.500"/><path d="M8 15h8l4 7-7 1-5-3z" fill="#2b9cc0"/><path d="M12 15v6M8 21l-3 2M17 19l5 4" stroke="#31485c" stroke-width="2"/>',
  vadd: '<path d="M4 3h15M4 3v15h6M11 3l-1 8" stroke="#4aa37f" fill="none"/><path d="M2 1h4v4H2zM9 1h4v4H9zM18 1h3v4h-3zM2 8h4v4H2zM2 16h4v4H2zM9 9h4v4H9z" fill="#dfe9ef" stroke="#577"/>' + gplus,
  radd: '<path d="M1 1h8v8H1z" fill="#0d6fb5"/><path d="M9 1h9v8H9z" fill="#e8eee8" stroke="#8a9"/><path d="M9 9h8v5H9z" fill="#5ab246"/><path d="M2 10h7v7H2z" fill="#dde" stroke="#99a"/>' + gplus + '<path d="M17 20h6l-3 4z"/>',
  psel: pie + badge('#09a55b', '<path d="M16.500 16l1 5.500 1.500-2 2 2 .8-.8-2-2 1.800-.8z" fill="#fff"/>'),
  pfind: pie + badge('#09a55b', '<circle cx="18" cy="18" r="2" fill="none" stroke="#fff" stroke-width="1.300"/><path d="M19.500 19.500l2.500 2.500" stroke="#fff" stroke-width="1.500"/>'),
  tri: '<path d="M1 2v21h18z" fill="#d2d2d2" stroke="#888" stroke-width="1.300"/><path d="M5 12v7h6z" fill="#eee" stroke="#888"/><path d="M19 1h4v20h-4zM19 4h2M19 7h2M19 10h2M19 13h2M19 16h2" fill="#ddd" stroke="#888"/>',
  magnet: '<path d="M4 12l7 7c4 3 10-2 7-7l-7-7" fill="none" stroke="#8a8a8a" stroke-width="5.500"/><path d="M1.500 13.500l5-4M9 7l4.500-4.500" stroke="#ddd" stroke-width="3"/>',
  undo: '<path d="M10 3L3 9l7 6v-4c6-1 9 2 5 9 7-3 7-14-5-13z" fill="#c4c4c4" stroke="#a5a5a5"/>',
  redo: '<path d="M14 3l7 6-7 6v-4c-6-1-9 2-5 9-7-3-7-14 5-13z" fill="#c4c4c4" stroke="#a5a5a5"/>',
  s1: blob + grot,
  s2: '<path d="M1 6l6-5 8 4v7l-6 5-7-3z" fill="#ccc" stroke="#8d8d8d"/><path d="M9 12l7-3 7 5-2 7-7 2-5-5z" fill="#c5c5c5" stroke="#8d8d8d"/><path d="M6 8l10 9M16 12v5h-5" stroke="#fff" fill="none" stroke-width="1.500"/>',
  s3: blob + ring + gstar,
  s4: '<ellipse cx="7" cy="18.500" rx="5.500" ry="4" fill="#c6c6c6" stroke="#8f8f8f" stroke-width="1.300"/>' + blob + gstar,
  s5: blob + '<ellipse cx="8" cy="6.500" rx="3.800" ry="2.300" fill="#aaa" stroke="#8d8d8d"/>' + gstar,
  s6: blob + ring + gx,
  s7: '<ellipse cx="7" cy="18.500" rx="5.500" ry="4" fill="#c6c6c6" stroke="#8f8f8f" stroke-width="1.300"/>' + blob + gx,
  s8: '<path d="M2 4c3-3 17-3 20 0s0 8-4 7-6 0-7 5-8 7-7 0S0 7 2 4z" fill="#c6c6c6" stroke="#8f8f8f" stroke-width="1.300"/>',
  s9: '<path d="M13 4c4-4 10-2 9 3s-5 4-6 7-5 8-10 6-4-8 0-9 4-4 7-7z" fill="#c6c6c6" stroke="#8f8f8f" stroke-width="1.300"/>',
  s10: '<path d="M1 7c0-6 9-6 9-1s-2 6-5 6-4-2-4-5zM14 6c0-5 8-5 9-1s-2 8-5 6-4-2-4-5z" fill="#c6c6c6" stroke="#8f8f8f"/>' + scissors,
  s11: '<path d="M1 6c1-5 9-5 9 0s-2 6-5 5-4-2-4-5zM13 5c1-5 9-4 10 0s-3 7-6 6-4-3-4-6z" fill="#c6c6c6" stroke="#8f8f8f"/>' + scissors,
  geo: '<rect x=".5" y=".5" width="23" height="23" rx="2" fill="#c9e3f6" stroke="#8cc3ea"/><path d="M1 7h22M1 17h22M9 1L6 23M18 1l-3 22" stroke="#eef7fd" stroke-width="1.500"/><path d="M8.500 7h9l-1.500 10H7z" fill="#2590d8"/>',
  x: letterX,
  vec: vee('#3c5a7d') + plus,
  rast: '<path d="M0 1h20v20H0z" fill="#6a97c8"/><path d="M0 1h7v7H0zM13 1h7v7h-7zM7 8h6v6H7zM0 14h7v7H0z" fill="#253f60"/>' + plus,
  feather: feather + plus, pg: elephant + plus,
  wms: globe('#a9c6e6', '#5585bd', '#c9daed') + worldBlobs + plus,
  wcs: globe('#6a97c8', '#253f60', '#fff') + '<path d="M3 7h3v3H3zM8 2h3v3H8zM13 2h3v3h-3zM18 7h3v3h-3zM3 12h3v3H3zM8 17h3v3H8z" fill="#253f60"/>' + plus,
  wfs: globe('#fff', '#6a97c8', '#8db3dd') + '<path d="M6 5l4 12 4-12h4" fill="none" stroke="#222" stroke-width="1.500"/><circle cx="10" cy="17" r="1.500" fill="#fff" stroke="#222"/><circle cx="18" cy="5" r="1.500" fill="#fff" stroke="#222"/><circle cx="14" cy="5" r="1.500" fill="#fff" stroke="#222"/><circle cx="6" cy="5" r="1.500" fill="#fff" stroke="#222"/>' + plus,
  comma: '<path d="M4 7c0-6 11-6 11 2 0 4-3 8-8 9l-1-1c3-2 4-3 4-6-3 1-6-1-6-4z" fill="#6a97c8" stroke="#2c4a70"/>' + plus,
  virt: '<path d="M1 1h22v21H1z" fill="#b9c9dc" stroke="#7b93b0"/>' + vee('#3c5a7d') + plus,
  mem: '<path d="M6 1v5M9.500 1v5M13 1v5M16.500 1v5M6 15v5M9.500 15v5M13 15v5" stroke="#253f60"/><path d="M3 5h18v11H3z" fill="#6a97c8" stroke="#2c4a70"/>' + star,
  brush: '<path d="M2 10l8-6 6 5-5 9-8 2z" fill="#f0d040"/><path d="M4 9l5-3" stroke="#e03535" stroke-width="3"/><path d="M2 15l8-5" stroke="#f05a3a" stroke-width="3"/><path d="M3 18h5" stroke="#5b8fd0" stroke-width="2"/><path d="M13 9l9-8 1 2-7 10c-2 6-5 7-9 8l2-7z" fill="#d8a860" stroke="#a07838"/>',
  group: '<path d="M3 6v16h12M7 3h12v14H7z" fill="#eee" stroke="#777" stroke-width="1.500"/><path d="M11 1v12" stroke="#777"/>' + plus,
  eye: '<path d="M0 12C6 3 18 3 24 12 18 20 6 20 0 12z" fill="#f3f3f3" stroke="#777"/><circle cx="12" cy="11" r="5.500" fill="#6a97c8"/><circle cx="12" cy="11" r="2.500" fill="#223"/><path d="M16 18h8l-4 5z"/>',
  filter,
  epsf: '<path d="M11 4C8 0 2 1 3 5q.5 2.500 5 3Q2 8 2 12c0 4 6 4 9 2" fill="none" stroke="#999" stroke-width="2"/><path d="M11 12h12l-1 3v8h-4v-6h-3v6h-4z" fill="#ddd" stroke="#aaa"/>',
  expand: treeDots + '<path d="M14 1h6v12h4l-7 9-7-9h4z" fill="#5585bd" stroke="#31557e"/>',
  collapse: treeDots + '<path d="M14 22h6V10h4l-7-9-7 9h4z" fill="#5585bd" stroke="#31557e"/>',
  rem: '<path d="M2 2h17v17H2z" fill="#eee" stroke="#777" stroke-width="1.500"/><rect x="14" y="16" width="10" height="7" rx="1" fill="#e8413f"/><path d="M16 19.500h6" stroke="#fff" stroke-width="1.500"/>',
  addl: '<path d="M2 2h17v17H2z" fill="#eee" stroke="#777" stroke-width="1.500"/><rect x="14" y="15" width="9" height="8" rx="2" fill="#5c9a5c"/><circle cx="18.500" cy="19" r="2" fill="#fff"/>',
  infob: '<circle cx="12" cy="12" r="10.500" fill="#5e8fc8" stroke="#3f6fa6"/><path d="M14 5l-.5 2.500M10 10.500h2.500L11 18h2.500" stroke="#fff" stroke-width="2.500" fill="none"/>',
  folder: '<path d="M3 1h18v22H3z" fill="#ffe9a2" stroke="#eac44f" stroke-width="1.500"/><path d="M18 15h3v8h-3z" fill="#ffe9a2" stroke="#eac44f"/>',
  fav: '<path d="M12 2l3 7h8l-6 5 2 8-7-5-7 5 2-8-6-5h8z" fill="#f6f6ea" stroke="#b4b4a0" stroke-width="1.500"/>',
  mssql: '<path d="M1 1c8 0 19 2 22 10C16 12 8 17 1 22c4-7 4-14 0-21z" fill="#6a97c8" stroke="#2c4a70"/><path d="M8 2c3 5 3 10 0 15M14 3c3 4 3 7 1 11" stroke="#2c4a70" stroke-width="1.500" fill="none"/>',
  oracle: '<rect x="1.500" y="4" width="21" height="15" rx="5" fill="#6a97c8" stroke="#31557e" stroke-width="2.500"/>',
  pgs: elephant, spl: feather,
  ows: globe('#fff', '#6a97c8', '#8db3dd'), xyz: globe('#a9c6e6', '#5585bd', '#c9daed') + worldBlobs,
  wcss: globe('#6a97c8', '#253f60', '#fff') + '<path d="M3 7h3v3H3zM8 2h3v3H8zM13 2h3v3h-3zM18 7h3v3h-3zM3 12h3v3H3zM8 14h8v4H8z" fill="#253f60"/>',
  wfss: globe('#fff', '#6a97c8', '#8db3dd') + '<path d="M5 5l5 12 5-12h4" fill="none" stroke="#345" stroke-width="2"/>',
  qg: qgisQ,
  gdal: '<circle cx="15" cy="13" r="8" fill="#3f9ccc"/><path d="M11 8c3-3 7-1 9 2l-5 6z" fill="#4a9a4a"/><path d="M2 6l8-4 1 3M5 6l1 7" stroke="#555" stroke-width="1.500" fill="none"/><text x="0" y="22" font-size="8" font-weight="bold" fill="#222" font-family="Liberation Sans">GDAL</text>',
  model: '<path d="M6 13l11-8M6 13l12 5" stroke="#888" stroke-width="3"/><circle cx="6" cy="13" r="5.500" fill="#444"/><circle cx="16" cy="6" r="5.500" fill="#3c6fd8"/><circle cx="18" cy="18" r="5.500" fill="#dc2626"/><circle cx="5" cy="11.500" r="1.500" fill="#ccc"/><circle cx="15" cy="4.500" r="1.500" fill="#bcd"/><circle cx="17" cy="16.500" r="1.500" fill="#fcc"/>',
  term: '<rect x=".8" y=".8" width="22.400" height="22.400" rx="2" fill="#bbb" stroke="#555"/><path d="M3.500 3.500h17v16h-17z" fill="#2d3d25" stroke="#111"/><path d="M6 7l4 2.500L6 12M11 13h5" stroke="#dde" stroke-width="1.500" fill="none"/>',
  fb: folderB,
  line12: '<path d="M3 4l5 13 6-11 7-1" fill="none" stroke="#7fb983" stroke-width="1.500"/><g fill="#888"><circle cx="3" cy="3.500" r="2"/><circle cx="8" cy="17" r="2"/><circle cx="14" cy="5" r="2"/><circle cx="21" cy="4.500" r="2"/></g>',
  ngexp: gis + '<path d="M23 15h-5v-3l-6 5 6 5v-3h5z" fill="#aaa" stroke="#888"/>',
  ngimp: '<g transform="translate(3 3) scale(.8)">' + gis + '<path d="M12 14h5v-3l7 6-7 6v-3h-5z" fill="#eee" stroke="#999"/></g>',
  ngfold: '<path d="M1 2h8l2 3h10v16H1z" fill="#2277b8"/><path d="M1 7h21v14H1z" fill="#3a9ce0"/><path d="M18.500 14v9.500M13.500 18.700h10" stroke="#1c7a10" stroke-width="4.500"/><path d="M18.500 15v7.500M14.500 18.700h8" stroke="#3dea22" stroke-width="2.500"/>',
  ngref: '<path d="M18.500 6.500a8.500 8.500 0 1 0 0 11" fill="none" stroke="#1d8fff" stroke-width="2.200"/><path d="M20.500 2v7h-7" fill="none" stroke="#1d8fff" stroke-width="2.200"/>',
  ngmap: '<path d="M1 1h22v21H1z" fill="none" stroke="#a6a6a6" stroke-width="1.500"/><path d="M1 6.500h22M3 4h2M6 4h2M9 4h2M2 19l5-5 4 4M11 20l5-5 6 5" fill="none" stroke="#a6a6a6" stroke-width="1.500"/><circle cx="15" cy="11" r="2" fill="none" stroke="#a6a6a6" stroke-width="1.500"/>',
  nggear: '<circle cx="12" cy="12" r="9.500" fill="none" stroke="#2b93f3" stroke-width="1.300"/><circle cx="12" cy="12" r="10.800" fill="none" stroke="#2b93f3" stroke-width="2" stroke-dasharray="4.240 4.240"/><circle cx="12" cy="12" r="5.500" fill="#f6f6f6" stroke="#999"/>'
};
const icon = (n, cls) => `<svg viewBox="0 0 24 24" class="${cls}">${I[n]}</svg>`;
const $ = s => document.getElementById(s);

$('menu').innerHTML = ['Проекты', 'Правка', 'Вид', 'Слой', 'Установки', 'Модули', 'Вектор', 'Растр', 'Database', 'Web', 'Анализ данных', 'Справка'].map(t => `<button class="whitespace-nowrap">${t}</button>`).join('');

// ---- main toolbars: '|' starts a group, 'v' is a drop-down arrow, '*' marks an active tool ----
const rows = [
  '| new open save saveas new2 wrench | *hand pan zin zout z11 zfull zsel zlay zlast znext bmnew bm refresh | info gear gv select gv eps gv desel table abacus sigma ruler v tip text v help',
  '| pencils pencil gsave pts arc gv ptmove node trash cut copy paste | abc pie ablue apin aeye amove arot aedit | map wadd *wfind | py grid',
  '| bot | vadd radd psel pfind _ | tri magnet undo redo s1 s2 s3 s4 s5 s6 s7 s8 s9 s10 s11 » | geo | *x'
];
I.saveas = I.save + badge('#5c9a5c', '<path d="M16 21.500l5-5.500" stroke="#fff" stroke-width="2"/>');
const cell = (t, i) => {
  if (t === '|') return `<span class="${i ? 'w-3 border-l border-[#b8b8b8] pl-1' : 'w-2.5 pl-1'} h-full flex items-center shrink-0"><span class="w-0 h-[26px] border-l-2 border-dotted border-[#b4b4b4]"></span></span>`;
  if (t === '_') return '<span class="w-2.5 shrink-0"></span>';
  if (t === '»') return '<button class="w-3.5 text-base font-bold leading-none shrink-0">»</button>';
  if (t === 'v') return '<button aria-label="Меню" class="w-3 shrink-0 grid place-items-center"><svg class="w-[7px] h-1" viewBox="0 0 7 4"><path d="M0 0h7L3.500 4z" fill="#222"/></svg></button>';
  if (t === 'gv') return '<button aria-label="Меню" class="w-3 shrink-0 grid place-items-center"><svg class="w-[7px] h-1" viewBox="0 0 7 4"><path d="M0 0h7L3.500 4z" fill="#777"/></svg></button>';
  const on = t[0] === '*', n = on ? t.slice(1) : t;
  if (n === 'bot') return `<button aria-label="bot" class="w-[38px] h-[30px] shrink-0 flex justify-center items-end pl-2">${icon(n, 'size-5')}</button>`;
  return `<button aria-label="${n}" class="w-[31px] h-[30px] shrink-0 grid place-items-center ${on ? 'bg-[#c2def5] border border-[#8ec6f2]' : ''}">${icon(n, 'size-6')}</button>`;
};
$('bars').innerHTML = rows.map(r => `<div class="h-[34px] border-t border-t-white border-b border-b-[#b8b8b8] flex items-center">${r.split(' ').map(cell).join('')}</div>`).join('');

$('side').innerHTML = '<div class="mx-1 mt-1 mb-1 border-t-2 border-dotted border-[#b4b4b4]"></div>' +
  'vec rast feather pg wms wcs wfs comma virt mem'.split(' ').map(n => `<div class="h-[30px] flex items-center pl-1 gap-[7px]"><button aria-label="${n}">${icon(n, 'size-6 block')}</button>${n === 'pg' || n === 'mem' ? '<svg class="w-[7px] h-1" viewBox="0 0 7 4"><path d="M0 0h7L3.500 4z" fill="#222"/></svg>' : ''}</div>`).join('') +
  '<div class="border-t border-[#b8b8b8] mt-px pt-1 px-1"><div class="border-t-2 border-dotted border-[#b4b4b4]"></div></div>';

document.querySelectorAll('[data-dock]').forEach(d => {
  const right = d.closest('main').lastElementChild.contains(d);
  d.className = right ? 'h-[19px] shrink-0 bg-[#dadada] border border-r-0 border-[#b8b8b8] flex items-center pl-px' : 'h-[19px] shrink-0 bg-[#dadada] border border-[#b8b8b8] flex items-center pl-px pr-1';
  d.innerHTML = `<h2 class="flex-1">${d.dataset.dock}</h2><button aria-label="Открепить" class="mr-2"><svg class="size-2 block" viewBox="0 0 8 8"><path d="M2.500 3V.5h5v4H6M.5 3.500h5v4h-5z" fill="none" stroke="#000"/><path d="M2 1h6M0 4h6" stroke="#000" stroke-width="2"/></svg></button><button aria-label="Закрыть панель"><svg class="size-2 block" viewBox="0 0 8 8"><path d="M.5.500l7 7M7.500.500l-7 7" stroke="#000" stroke-width="1.600"/></svg></button>`;
});

const small = n => n === 'v' ? '<svg class="w-[7px] h-1 mx-0.5" viewBox="0 0 7 4"><path d="M0 0h7L3.500 4z" fill="#666"/></svg>' : `<button aria-label="${n}" class="w-[23px] grid place-items-center">${icon(n, 'size-[15px]')}</button>`;
$('layerTools').innerHTML = 'brush group eye filter epsf v expand collapse rem'.split(' ').map(small).join('');
$('browserTools').innerHTML = 'addl refresh filter collapse infob'.split(' ').map(small).join('');

// ---- trees ----
const chev = '<svg class="w-1.5 h-2.5 shrink-0" viewBox="0 0 6 10"><path d="M1 1l4 4-4 4" fill="none" stroke="#a6a6a6" stroke-width="1.500"/></svg>';
const chevDown = '<svg class="w-2 h-1.5 shrink-0" viewBox="0 0 8 6"><path d="M.500 1L4 4.500 7.500 1" fill="none" stroke="#404040" stroke-width="2"/></svg>';
$('browserTree').innerHTML = [[1, 'folder', 'Домашний каталог'], [0, 'fav', 'Избранное'], [1, 'folder', 'C:/'], [1, 'folder', 'D:/'], [0, 'mssql', 'MSSQL'], [0, 'oracle', 'Oracle'], [0, 'pgs', 'PostGIS'], [0, 'spl', 'SpatiaLite'], [1, 'ows', 'OWS'], [0, 'xyz', 'Tile Server (XYZ)'], [0, 'wcss', 'WCS'], [0, 'wfss', 'WFS'], [1, 'xyz', 'WMS']]
  .map(([c, i, t]) => `<li class="h-[18px] flex items-center pl-1.5"><span class="w-[17px] flex">${c ? chev : ''}</span>${icon(i, 'size-4 mr-[5px]')}${t}</li>`).join('');
$('toolTree').innerHTML =
  `<li class="h-4 flex items-center pl-[5px]"><span class="w-[17px] flex">${chevDown}</span>Последние используемые алгоритмы</li>` +
  `<li class="h-[18px] flex items-center pl-[42px]">${icon('qg', 'size-4 mr-1')}Связать таблицы атрибутов</li>` +
  '<li class="h-[15px] flex items-center pl-[42px]">Объединение</li><li class="h-[15px] flex items-center pl-[42px]">Объединить векторные слои</li>' +
  [['gdal', 'GDAL/OGR [48 геоалгоритмов]'], ['qg', 'Геоалгоритмы QGIS [117 геоалгоритмов]'], ['model', 'Модели [0 геоалгоритмов]'], ['term', 'Скрипты [0 геоалгоритмов]']]
  .map(([i, t]) => `<li class="h-[18px] flex items-center pl-1.5"><span class="w-[17px] flex">${chev}</span>${icon(i, 'size-4 mr-1')}${t}</li>`).join('');
$('ngTree').innerHTML = `<li class="h-[18px] flex items-center pl-1.5"><span class="w-[17px] flex">${chevDown}</span>${icon('fb', 'size-4 mr-[5px]')}Основная группа ресурсов</li>` +
  [[1, 'fb', 'EKB'], [1, 'fb', 'forms'], [1, 'fb', 'Kaluga'], [1, 'fb', 'moscow'], [1, 'fb', 'test'], [1, 'fb', 'Testing'], [1, 'fb', 'tif'], [0, 'fb', 'Коллекторы'], [1, 'line12', '1.2'], [1, 'x', 'ng_tracker']]
  .map(([c, i, t]) => `<li class="h-[18px] flex items-center pl-[27px]"><span class="w-[17px] flex">${c ? chev : ''}</span>${icon(i, 'size-4 mr-[5px]')}${t}</li>`).join('');

const nav = (l, p) => `<button aria-label="${l}" class="w-[21px] h-5 bg-[#a0a0a0] border-2 border-[#c6c6c6] grid place-items-center"><svg class="size-2" viewBox="0 0 8 8">${p}</svg></button>`;
$('identify').innerHTML = nav('Первый', '<path d="M0 0h2v8H0zM8 0v8L2 4z" fill="#fff"/>') + nav('Предыдущий', '<path d="M7 0v8L1 4z" fill="#fff"/>') +
  '<span class="-mx-0.5">Объекты не найдены</span>' + nav('Следующий', '<path d="M1 0v8l6-4z" fill="#fff"/>') + nav('Последний', '<path d="M6 0h2v8H6zM0 0v8l6-4z" fill="#fff"/>');

const sep = '<span class="w-px h-6 bg-[#c8c8c8] mx-[3px]"></span>';
const ng = (n, w, s) => `<button aria-label="${n}" class="${w} grid place-items-center">${icon(n, s)}</button>`;
$('ngTools').innerHTML = '<span class="ml-1 w-2 h-[26px] border-l-2 border-dotted border-[#b4b4b4]"></span>' + ng('ngexp', 'w-7', 'size-5') + ng('ngimp', 'w-[25px]', 'size-5') + sep + ng('ngfold', 'w-[30px]', 'size-5') + ng('ngref', 'w-[30px]', 'size-4') + sep + ng('ngmap', 'w-[30px]', 'size-5') + sep + ng('nggear', 'w-[30px]', 'size-5');

// ---- recent projects ----
const river = `<svg class="w-[250px] h-[177px] rounded-lg shrink-0" viewBox="0 0 250 177"><path d="M0 0h250v177H0z" fill="#f0f3c7"/>
<path d="M166 0h39l14 33 4 26 16 17 11 7v94H0v-61h54q10 0 13-13l2-34q4-14 16-20l12 4q-14 8-18 22l-1 34-4 10 8 14 24 12 30 14 14 3q20 8 42 0l18-16 3-26-12-23-6-27-9-23-11-20z" fill="#b5d3d8"/>
<path d="M84 60q16-10 29-5t24 4q18-3 17-18t-10-22V0" fill="none" stroke="#b5d3d8" stroke-width="10"/>
<path d="M85 0l8 17 20 6 20 2 8 10M100 0l14 20M116 0l-14 18M134 14L140 0M88 18l12 26M155 20l10 4 4 0M92 20l-6-8" fill="none" stroke="#b5d3d8" stroke-width="3"/>
<path d="M118 64q-18 10-15 27 0 5 12 9l23 11 23-8q6-8 3-17-6-16-17-23M138 111q-12 2-9 15 8 8 36 2 12 4 9 21-8 10-20 12" fill="none" stroke="#b5d3d8" stroke-width="4.500"/>
<path d="M30 0l-6 26 6 22M40 8l14 20M14 0Q4 14 8 26t-6 18M10 26q14 10 13 22t-10 20L0 56M48 20l-5 25M20 30q6 16-2 32M0 84l10-12 6 8M158 30l4 36M176 40l-2 26 6 30M110 90l8 10M154 100l-4 14M120 130l10 14M34 20l4 20" fill="none" stroke="#b5d3d8" stroke-width="1.500"/>
<g fill="#cfb183"><path d="M49 43l4 4 6-4 4 8 11 1-5 30-2 20q-1 10-8 12H13l4-16-9-8-4-10 12 2 2 10 4-10 8 2 6-15 4-8zM58 6l8-1 2 11 4 2 0 12 10-8 8 10-1 6 3 8-8 2-4 4-5-8-4-20-8-12zM96 33h15v14l-16 0zM109 73l12-8 8 1-4 10 2 10 6 4 4-2 2 8 8 2-1 6-8 9-33-20zM154 108h11l-2 14-8 2zM174 156l5-26 8 2 6-8 5 4-6 16-10 14zM78 98l4-18 9-8 2 4-8 10 4 2-6 10zM83 106l10-3-3 13 6 4 2 16-3 0-8-16zM153 8l3 10 0 12-3-4z"/></g>
<path d="M180 154l10-26M176 148l12-20" stroke="#f0f3c7"/><path d="M14 112l8-36M26 100l6-22" stroke="#b5d3d8"/>
<path d="M24 134l48 7 10 14 13 4-25-1-24-18zM60 168l26-4 42 9 8 4H64zM12 160l14 2-4 4-8-1z" fill="#f0f3c7"/>
<path d="M212 0h38v50l-12 4-12-18-8-20z" fill="#dcdcdc"/><path d="M220 34l14 2 12 18 4 30-14-14-12-14z" fill="#f0f3c7"/><path d="M238 58l12-6v30l-12-12z" fill="#ddd"/>
<g stroke="#999" stroke-width="5" fill="none"><path d="M238 0l-20 26M250 6l-26 30M222 2l26 24M242 14l-14 24"/></g>
<path d="M238 0l-20 26M250 6l-26 30M222 2l26 24M242 14l-14 24M238 60l12 6M242 72l8-6M244 54v26M250 20l-14 20" stroke="#fff" stroke-width="3" fill="none"/>
<path d="M211 0l4 20 8 14 12-2 15 22" fill="none" stroke="#f4ef9a" stroke-width="4"/><path d="M210 2l2 12 6 20" stroke="#000" stroke-width="2" fill="none"/><path d="M240 38l10 14" stroke="#f6c48a" stroke-width="5"/>
<path d="M45 0l9 13 11 8 9 25 12 15 12-4 11-5 12 4 15 6 14-8v9l32 17 50-12 18-13M0 131l67 10 69 25 49-3 65-36" fill="none" stroke="#777" stroke-width="2"/></svg>`;

const towns = [[37,17],[63,31],[28,34],[59,42],[49,51],[56,53],[77,61],[121,72],[120,80],[67,77],[75,82],[114,93],[108,100],[152,94],[182,101],[12,109],[78,114],[94,117],[123,120],[73,127],[92,132],[82,139],[90,146],[19,162],[66,161],[102,168]];
const names = [[0,11,'атово'],[-2,28,'лово'],[69,25,'Токсово'],[63,47,'Новое Девяткино'],[11,55,'Бугры'],[126,66,'посёлок имени Мороз'],[16,72,'Янино-1'],[181,37,'Новая Ладог'],[31,95,'Старая'],[157,89,'Приладожский'],[-4,103,'ье'],[32,111,'Отрадное'],[114,114,'Дубровка'],[187,115,'Назия'],[-2,131,'ок Тельмана'],[129,134,'Мга'],[4,152,'Красный Бор'],[95,159,'Ульяновка'],[1,175,'на Форносово'],[108,180,'Тосно'],[234,180,'Ки']];
const region = `<svg class="w-[250px] h-[177px] rounded-lg shrink-0" viewBox="0 0 250 177">
<defs><pattern id="fen" width="43" height="37" patternUnits="userSpaceOnUse"><path d="M0 0h43v37H0z" fill="#b3d5cc"/><path d="M2 3q5-4 9 1t9 2l6 8-10 5-8-6-8 4zM24 22l9-5 8 6-4 10-9 2zM3 24l9 1 5 8H4zM32 2l7 1 2 6-8 2z" fill="#a9d0a0"/><path d="M26 10l3 1 1 4-4 0zM14 24l3 1-1 4-3-1zM38 14l3 1v3h-3z" fill="#f0dfae"/><path d="M8 12v3M17 9v3M24 16v3M36 5v3M20 30v3M3 18v3M30 26v3M11 28v3" stroke="#6b9b86"/></pattern></defs>
<path d="M0 0h250v177H0z" fill="url(#fen)"/>
<path d="M98 0h98l-4 26 26 14 8 30-20 8-30-2-14 6-38-6-12-16-6-26z" fill="#b5d3d8"/><path d="M200 0h50v20l-30-12z" fill="#b5d3d8"/><path d="M180 20l24-20 44 8M190 40q0-24 12-26t16 10M206 60l40-34" fill="none" stroke="#7cc3c3"/>
<path d="M0 42l22-2 28 10 14 16-2 30 4 26 18 6-16 12-22-2-14-14 0-12-18-4-14 0z" fill="#fff"/>
<g fill="none"><path d="M67 0L54 26l-3 20M94 52l22 17 13 43 9 34-4 20-40 6" stroke="#8a8a5a" stroke-width="5"/><path d="M67 0L54 26l-3 20M78 0l-8 20M94 52l22 17 13 43 9 34-4 20-40 6M77 61l20-6 0-14M96 46L86 30M82 78l2 20-14 14M132 80v24M28 34L20 16 30 0M0 160l30 10 20-4" stroke="#fdf9a8" stroke-width="4"/>
<path d="M116 95l12 24-24 24-18 20-6 14M250 132l-12 20-8 25M70 86l22 14" stroke="#f6c79a" stroke-width="4"/>
<path d="M38 0l9 32 4 16M74 89l24-6 18 2 20 10 25-1 35-12 36-10 18-10M67 136l22 16 14 25M24 152v14" stroke="#ee9c9c" stroke-width="6"/>
<path d="M58 12l4 19M74 59l10 2 8 10 14 4 14 9M83 97l20 14 26 11M129 121l26-8 28-12 30-10 37-5M129 122l18 16 27 14 20 20 16 4M20 162h45l20 8M123 120l-30 20M114 93l-4 20" stroke="#000" stroke-width="2"/>
<path d="M4 30l10 6 13 1 10 7 12 2 8 8 8 8-1 8-2 9 2 10-6 13 4 8 9 2 16 4M0 139l18 0 18-3 14 5 12-2 14-14M11 109l8 5 12-2 7 14" stroke="#f7d740" stroke-width="7" stroke-linejoin="round"/>
<path d="M147 0l-2 39-4 28-25 12-1 23-10 4-6 6-7-1-9 15 10 1 8 5 8-1 4 11 10 0 5 6 12-4 9 3 2 8 5 9 10 2 8 5 6-4 5 5 6-10 4-9 12-4 0-12 4-11 12-2 6-8 11 1 8 6 12 1M188 0l4 12 4 14 12 3 9 8-2 14 4 18 9 13 2 35 6 8 6-2M4 30l10 6 13 1 10 7 12 2 8 8 8 8-1 8-2 9 2 10-6 13 4 8 9 2 16 4M0 139l18 0 18-3 14 5 12-2 14-14M11 109l8 5 12-2 7 14M0 128l8 10 6 12 20-6M60 140v30M250 136l-4 12M0 0l8 4" stroke="#a443b6" stroke-width="4.500" stroke-linejoin="round"/><path d="M130 119l4 8" stroke="#f0a" stroke-width="4"/></g>
${towns.map(([x, y]) => `<circle cx="${x}" cy="${y}" r="3.800" fill="#fff" stroke="#000" stroke-width="1.400"/><circle cx="${x}" cy="${y}" r="1" fill="#000"/>`).join('')}
<g font-size="12" font-family="Open Sans, Noto Sans, sans-serif" stroke="#fff" stroke-width="3" stroke-linejoin="round" paint-order="stroke">${names.map(([x, y, t]) => `<text x="${x}" y="${y}">${t}</text>`).join('')}</g></svg>`;
const lastMap = '<svg class="w-[250px] h-[177px] rounded-lg shrink-0" viewBox="0 0 250 177"><path d="M0 0h250v177H0z" fill="#d3eab4"/><path d="M0 0h120l10 20H0z" fill="#b5d3d8"/><path d="M120 0h30l10 8 12-8h10l-6 14H130z" fill="#f4f2ea"/><path d="M122 0l8 12" stroke="#f6c48a" stroke-width="2"/></svg>';

const P = 'C:\\Users\\user\\Desktop\\';
$('projects').innerHTML = [
  [0, '', P + 'Ben\\custom-3738651c-20200304-ru-shape\\data.qgs'],
  [0, '', P + 'testshape\\custom-03292862-20200514-ru-geojson\\data.qgs'],
  [1, river, P + 'testshape\\custom-03292862-20200514-ru-geojson_fix.qgs'],
  [1, region, P + 'testshape\\RU-LEN-9bb0efe7-20200430-ru-shape\\data.qgs'],
  [1, '', P + 'testshape\\Kaluga\\data.qgs'],
  [1, '', P + 'testshape\\RU-KAM-755aab34-20200421-ru-shape\\data.qgs'],
  [1, '', P + 'testshape\\not_open\\data.qgs'],
  [1, lastMap, '']
].map(([grey, map, path]) => `<article class="shrink-0 bg-[#ececec] rounded-lg flex ${map ? 'p-[5px] pt-0 h-[187px]' : 'h-[71px]'} ${grey ? 'text-[#808080]' : ''}">
${map ? `<div class="pt-[5px]">${map}</div>` : ''}${path ? `<div class="pt-3.5 ${map ? 'pl-[19px]' : 'pl-3.5'} leading-[13px] whitespace-nowrap"><h3 class="text-sm leading-[18px] font-bold">Геоданные с data.nextgis.com</h3><p>${path}</p><p>EPSG:3857 (WGS 84 / Pseudo Mercator)</p></div>` : ''}</article>`).join('');
</script>
</body>
</html>
